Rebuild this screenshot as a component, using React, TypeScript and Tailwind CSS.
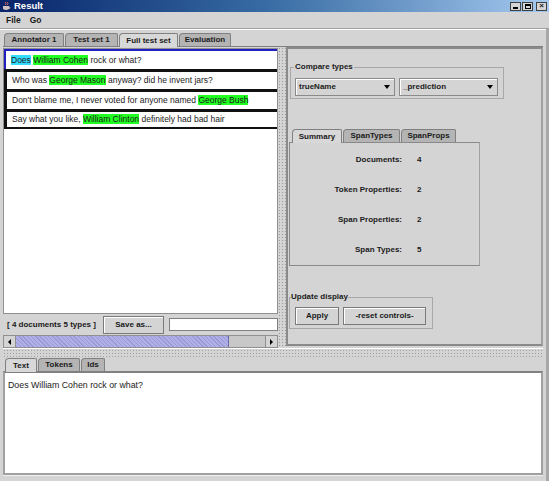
import React from "react";

const rows: { parts: { t: string; c?: string }[] }[] = [
  { parts: [{ t: "Does", c: "bg-[#33ddff]" }, { t: " " }, { t: "William Cohen", c: "bg-[#22ff22]" }, { t: " rock or what?" }] },
  { parts: [{ t: "Who was " }, { t: "George Mason", c: "bg-[#22ff22]" }, { t: " anyway? did he invent jars?" }] },
  { parts: [{ t: "Don't blame me, I never voted for anyone named " }, { t: "George Bush", c: "bg-[#22ff22]" }] },
  { parts: [{ t: "Say what you like, " }, { t: "William Clinton", c: "bg-[#22ff22]" }, { t: " definitely had bad hair" }] },
];

function Tab({ label, active, w }: { label: string; active?: boolean; w: string }) {
  return (
    <div
      className={`${w} flex items-center justify-center font-bold text-[8px] border border-b-0 border-[#808080] rounded-tr-[2px] rounded-tl-[4px] ${
        active ? "bg-[#d8d8d8] h-[14px] -mb-px relative z-10" : "bg-[#b4b4b4] h-[13px]"
      }`}
    >
      {label}
    </div>
  );
}

function Combo({ label, w }: { label: string; w: string }) {
  return (
    <div className={`${w} h-[18px] flex items-center justify-between bg-[#d4d4d4] border border-[#8a8a8a] shadow-[inset_1px_1px_0_#fff] pl-[3px] pr-[4px]`}>
      <span className="font-bold text-[8px]">{label}</span>
      <span className="w-0 h-0 border-l-[3.5px] border-r-[3.5px] border-t-[4px] border-l-transparent border-r-transparent border-t-black" />
    </div>
  );
}

function Button({ label, w }: { label: string; w: string }) {
  return (
    <div className={`${w} h-[18px] flex items-center justify-center font-bold text-[8px] bg-[#d4d4d4] border border-[#7a7a7a] shadow-[inset_1px_1px_0_#fff]`}>
      {label}
    </div>
  );
}

export default function App() {
  return (
    <div className="w-[549px] h-[481px] bg-[#d4d4d4] flex flex-col overflow-hidden text-[#1a1a1a] font-['Liberation_Sans',Arial,sans-serif] text-[8.5px]">
      {/* Title bar */}
      <div className="h-[12px] flex items-center bg-gradient-to-r from-[#0a246a] via-[#3a6ea5] to-[#a6caf0] px-[2px] shrink-0">
        <svg width="9" height="10" viewBox="0 0 9 10" className="mr-[3px]">
          <path d="M3 1 Q5 3 3 4 M5 1 Q7 3 5 4" stroke="#d06060" fill="none" strokeWidth="1" />
          <path d="M1 5 H7 V8 Q4 10 1 8 Z" fill="#d0c0c0" />
          <path d="M7 6 Q9 6 7 8" stroke="#d0c0c0" fill="none" />
        </svg>
        <span className="text-white font-bold text-[9.5px]">Result</span>
        <div className="ml-auto flex gap-[1px] items-center">
          <div className="w-[11px] h-[9px] bg-[#d4d4d4] border border-[#404040] flex items-end justify-center pb-[1px]">
            <div className="w-[5px] h-[2px] bg-black" />
          </div>
          <div className="w-[11px] h-[9px] bg-[#d4d4d4] border border-[#404040] flex items-center justify-center">
            <div className="w-[6px] h-[5px] border border-black border-t-2" />
          </div>
          <div className="w-[11px] h-[9px] bg-[#d4d4d4] border border-[#404040] ml-[2px] flex items-center justify-center text-[8px] font-bold leading-none">
            ×
          </div>
        </div>
      </div>

      {/* Menu bar */}
      <div className="h-[17px] flex items-center gap-[9px] px-[6px] font-bold text-[8.5px] border-b border-[#a0a0a0] shadow-[0_1px_0_#fff] shrink-0">
        <span>File</span>
        <span>Go</span>
      </div>

      <div className="flex-1 flex flex-col px-[3px] border-r-[3px] border-[#a8a8a8]">
        {/* Top tabs */}
        <div className="flex items-end gap-[1px] h-[15px] mt-[2px] pl-[1px] shrink-0">
          <Tab label="Annotator 1" w="w-[60px]" />
          <Tab label="Test set 1" w="w-[53px]" />
          <Tab label="Full test set" w="w-[59px]" active />
          <Tab label="Evaluation" w="w-[52px]" />
        </div>

        {/* Content */}
        <div className="h-[302px] flex border-t border-[#808080] shrink-0">
          {/* Left column */}
          <div className="w-[275px] flex flex-col pt-[1px]">
            <div className="h-[266px] bg-white border border-[#909090] flex flex-col">
              {rows.map((r, i) => (
                <div
                  key={i}
                  className={`h-[20px] flex items-center pl-[5px] whitespace-pre ${
                    i === 0 ? "border-t-2 border-l-2 border-[#2020c0]" : "border-t-[3px] border-l-[3px] border-[#111]"
                  } ${i === rows.length - 1 ? "border-b-2 border-b-[#111]" : ""}`}
                >
                  <span>
                    {r.parts.map((p, j) => (
                      <span key={j} className={p.c}>
                        {p.t}
                      </span>
                    ))}
                  </span>
                </div>
              ))}
            </div>
            <div className="h-[21px] flex items-center pl-[4px]">
              <span className="font-bold text-[8px] w-[96px]">[ 4 documents 5 types ]</span>
              <Button label="Save as..." w="w-[61px]" />
              <div className="ml-[5px] flex-1 h-[13px] bg-white border border-[#808080]" />
            </div>
            <div className="h-[13px] flex items-stretch border border-[#909090] bg-[#c8c8c8]">
              <div className="w-[12px] flex items-center justify-center border-r border-[#909090] bg-[#d4d4d4]">
                <div className="w-0 h-0 border-t-[3px] border-b-[3px] border-r-[3px] border-t-transparent border-b-transparent border-r-black" />
              </div>
              <div className="w-[213px] bg-[repeating-linear-gradient(45deg,#9a9ad8_0_1px,#b0b0e6_1px_3px)] border-r border-[#6a6aa8]" />
              <div className="flex-1" />
              <div className="w-[12px] flex items-center justify-center border-l border-[#909090] bg-[#d4d4d4]">
                <div className="w-0 h-0 border-t-[3px] border-b-[3px] border-l-[3px] border-t-transparent border-b-transparent border-l-black" />
              </div>
            </div>
          </div>

          {/* Vertical splitter */}
          <div className="w-[8px] bg-[radial-gradient(#9a9a9a_0.6px,transparent_0.8px)] bg-[length:3px_3px]" />

          {/* Right panel */}
          <div className="flex-1 flex flex-col border-2 border-[#8a8a8a] border-r-[#a0a0a0] pl-[1px] mb-[2px]">
            <fieldset className="mt-[12px] ml-[1px] w-[214px] h-[38px] border border-[#a8a8a8] px-[4px] pt-[5px]">
              <legend className="font-bold text-[8px] px-[1px] -ml-[1px]">Compare types</legend>
              <div className="flex gap-[4px]">
                <Combo label="trueName" w="w-[100px]" />
                <Combo label="_prediction" w="w-[99px]" />
              </div>
            </fieldset>

            <div className="mt-[29px] ml-[3px] flex items-end gap-[1px] h-[14px]">
              <Tab label="Summary" w="w-[50px]" active />
              <Tab label="SpanTypes" w="w-[57px]" />
              <Tab label="SpanProps" w="w-[55px]" />
            </div>
            <div className="w-[191px] h-[124px] border border-[#8a8a8a] border-r-[#a0a0a0] bg-[#d4d4d4] pt-[2px]">
              <div className="grid grid-cols-[112px_1fr] gap-x-[15px] font-bold text-[8px]">
                {[
                  ["Documents:", "4"],
                  ["Token Properties:", "2"],
                  ["Span Properties:", "2"],
                  ["Span Types:", "5"],
                ].map(([k, v]) => (
                  <React.Fragment key={k}>
                    <div className="h-[30px] flex items-center justify-end">{k}</div>
                    <div className="h-[30px] flex items-center">{v}</div>
                  </React.Fragment>
                ))}
              </div>
            </div>

            <fieldset className="mt-[25px] w-[144px] h-[38px] border border-[#a8a8a8] px-[5px]">
              <legend className="font-bold text-[8px] -ml-[4px] px-0">Update display</legend>
              <div className="flex gap-[4px] mt-[4px]">
                <Button label="Apply" w="w-[44px]" />
                <Button label="-reset controls-" w="w-[83px]" />
              </div>
            </fieldset>
          </div>
        </div>

        {/* Horizontal splitter */}
        <div className="h-[9px] shrink-0 bg-[radial-gradient(#a0a0a0_0.6px,transparent_0.8px)] bg-[length:3px_3px] border-t border-white" />

        {/* Bottom tabs */}
        <div className="flex items-end gap-[1px] h-[14px] pl-[2px] shrink-0">
          <Tab label="Text" w="w-[32px]" active />
          <Tab label="Tokens" w="w-[42px]" />
          <Tab label="Ids" w="w-[24px]" />
        </div>
        <div className="h-[104px] bg-white border-2 border-[#a0a0a0] border-t-[#808080] px-[3px] pt-[6px] text-[8.8px] shrink-0">
          Does William Cohen rock or what?
        </div>
        <div className="flex-1 border-t border-[#f0f0f0]" />
      </div>
    </div>
  );
}
